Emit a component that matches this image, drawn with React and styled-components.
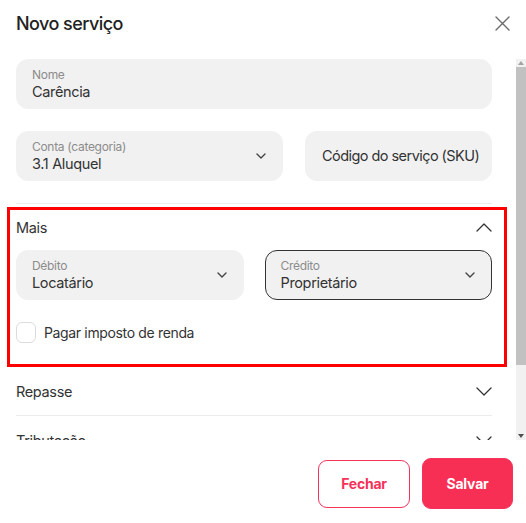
import React from 'react';
import styled, { createGlobalStyle } from 'styled-components';

const GlobalStyle = createGlobalStyle`
    html, body {
        margin: 0;
        padding: 0;
        background: #fff;
    }

    body {
        font-family: Inter, "Noto Sans", sans-serif;
        color: #333;
        letter-spacing: -0.35px;
    }

    * {
        box-sizing: border-box;
    }
`;

const Modal = styled.div`
    display: flex;
    flex-direction: column;
    width: 526px;
    height: 523px;
    background: #fff;
`;

const Header = styled.div`
    display: flex;
    align-items: center;
    justify-content: space-between;
    height: 46px;
    padding: 0 16px;

    h1 {
        margin: 0;
        font-size: 18px;
        font-weight: 500;
        color: #222;
        letter-spacing: -0.55px;
    }

    button {
        display: flex;
        padding: 0;
        border: none;
        background: transparent;
        cursor: pointer;
    }
`;

const Body = styled.div`
    display: flex;
    height: 381px;
    margin-top: 13px;
`;

const Content = styled.div`
    flex: 1;
    overflow: hidden;
    padding: 0 24px 0 16px;
`;

const Scrollbar = styled.div`
    display: flex;
    flex-direction: column;
    width: 10px;
    background: #f1f1f1;

    .btn {
        display: flex;
        align-items: center;
        justify-content: center;
        height: 8px;
    }

    .thumb {
        height: 298px;
        background: #c1c1c1;
    }

    .spacer {
        flex: 1;
    }
`;

const Field = styled.div`
    display: flex;
    align-items: ${({ $center }) => ($center ? 'center' : 'flex-start')};
    justify-content: space-between;
    min-width: 0;
    height: 50px;
    padding: ${({ $center }) => ($center ? '0 6px 0 16px' : '8px 16px 0 15px')};
    border-radius: 12px;
    background: #f1f1f1;
    border: ${({ $active }) => ($active ? '1px solid #333' : '1px solid #f1f1f1')};

    .texts {
        display: flex;
        flex-direction: column;
    }

    label {
        font-size: 12px;
        line-height: 16px;
        color: #8c8c8c;
        margin-top: -1px;
        letter-spacing: -0.3px;
    }

    span {
        font-size: 14.5px;
        line-height: 18px;
        color: #333;
    }

    svg {
        align-self: center;
        margin-top: ${({ $center }) => ($center ? '0' : '-8px')};
    }
`;

const Placeholder = styled.span`
    font-size: 14px;
    color: #444;
    white-space: nowrap;
    letter-spacing: -0.55px;
`;

const Row = styled.div`
    display: grid;
    grid-template-columns: ${({ $cols }) => $cols};
    gap: ${({ $gap }) => $gap}px;
    margin-top: ${({ $top }) => $top}px;
`;

const Divider = styled.div`
    height: 1px;
    margin-top: 22px;
    background: #ececec;
`;

const Highlight = styled.section`
    margin: 3px -15px 0 -9px;
    padding: 0 12px 21px 6px;
    border: 3px solid #ff0000;
`;

const SectionHeader = styled.div`
    display: flex;
    align-items: center;
    justify-content: space-between;
    height: ${({ $h }) => $h}px;
    font-size: 14.5px;
    color: #333;
    border-bottom: ${({ $line }) => ($line ? '1px solid #ececec' : 'none')};
`;

const CheckRow = styled.label`
    display: flex;
    align-items: center;
    gap: 8px;
    margin-top: 22px;
    font-size: 14px;
    color: #333;

    .box {
        width: 20px;
        height: 21px;
        border: 1px solid #dcdcdc;
        border-radius: 6px;
        background: #fff;
    }
`;

const Footer = styled.div`
    display: flex;
    justify-content: flex-end;
    align-items: center;
    gap: 12px;
    padding: 18px 13px 0 0;
`;

const Button = styled.button`
    width: ${({ $primary }) => ($primary ? '91px' : '92px')};
    height: ${({ $primary }) => ($primary ? '51px' : '48px')};
    border-radius: 9px;
    border: 1px solid #f5325a;
    background: ${({ $primary }) => ($primary ? '#f72f54' : '#fff')};
    color: ${({ $primary }) => ($primary ? '#fff' : '#f5325a')};
    font-family: Inter, sans-serif;
    font-size: 14px;
    font-weight: 700;
    letter-spacing: -0.2px;
    cursor: pointer;
`;

const SmallChevron = () => (
    <svg width="10" height="6" viewBox="0 0 10 6" fill="none">
        <path d="M1 1l4 4 4-4" stroke="#444" strokeWidth="1.4" strokeLinecap="round" strokeLinejoin="round" />
    </svg>
);

const Chevron = ({ up }) => (
    <svg width="16" height="9" viewBox="0 0 16 9" fill="none">
        <path
            d={up ? 'M1 8l7-7 7 7' : 'M1 1l7 7 7-7'}
            stroke="#333"
            strokeWidth="1.3"
            strokeLinecap="round"
            strokeLinejoin="round"
        />
    </svg>
);

const SelectField = ({ label, value, active }) => (
    <Field $active={active}>
        <div className="texts">
            <label>{label}</label>
            <span>{value}</span>
        </div>
        <SmallChevron />
    </Field>
);

const App = () => {
    return (
        <>
        <GlobalStyle />
        <Modal>
            <Header>
                <h1>Novo serviço</h1>
                <button aria-label="Fechar">
                    <svg width="15" height="15" viewBox="0 0 15 15" fill="none">
                        <path d="M1 1l13 13M14 1L1 14" stroke="#6b6b6b" strokeWidth="1.4" strokeLinecap="round" />
                    </svg>
                </button>
            </Header>

            <Body>
                <Content>
                    <Field>
                        <div className="texts">
                            <label>Nome</label>
                            <span>Carência</span>
                        </div>
                    </Field>

                    <Row $cols="267px minmax(0, 1fr)" $gap={22} $top={22}>
                        <SelectField label="Conta (categoria)" value="3.1 Aluquel" />
                        <Field $center>
                            <Placeholder>Código do serviço (SKU)</Placeholder>
                        </Field>
                    </Row>

                    <Divider />

                    <Highlight>
                        <SectionHeader $h={34}>
                            Mais
                            <Chevron up />
                        </SectionHeader>
                        <Row $cols="1fr 1fr" $gap={21} $top={6}>
                            <SelectField label="Débito" value="Locatário" />
                            <SelectField label="Crédito" value="Proprietário" active />
                        </Row>
                        <CheckRow>
                            <span className="box" />
                            Pagar imposto de renda
                        </CheckRow>
                    </Highlight>

                    <SectionHeader $h={49} $line>
                        Repasse
                        <Chevron />
                    </SectionHeader>
                    <SectionHeader $h={48}>
                        Tributação
                        <Chevron />
                    </SectionHeader>
                </Content>

                <Scrollbar>
                    <div className="btn">
                        <svg width="6" height="4" viewBox="0 0 6 4"><path d="M3 0l3 4H0z" fill="#a3a3a3" /></svg>
                    </div>
                    <div className="thumb" />
                    <div className="spacer" />
                    <div className="btn">
                        <svg width="6" height="4" viewBox="0 0 6 4"><path d="M0 0h6L3 4z" fill="#505050" /></svg>
                    </div>
                </Scrollbar>
            </Body>

            <Footer>
                <Button>Fechar</Button>
                <Button $primary>Salvar</Button>
            </Footer>
        </Modal>
        </>
    );
};

export default App;
